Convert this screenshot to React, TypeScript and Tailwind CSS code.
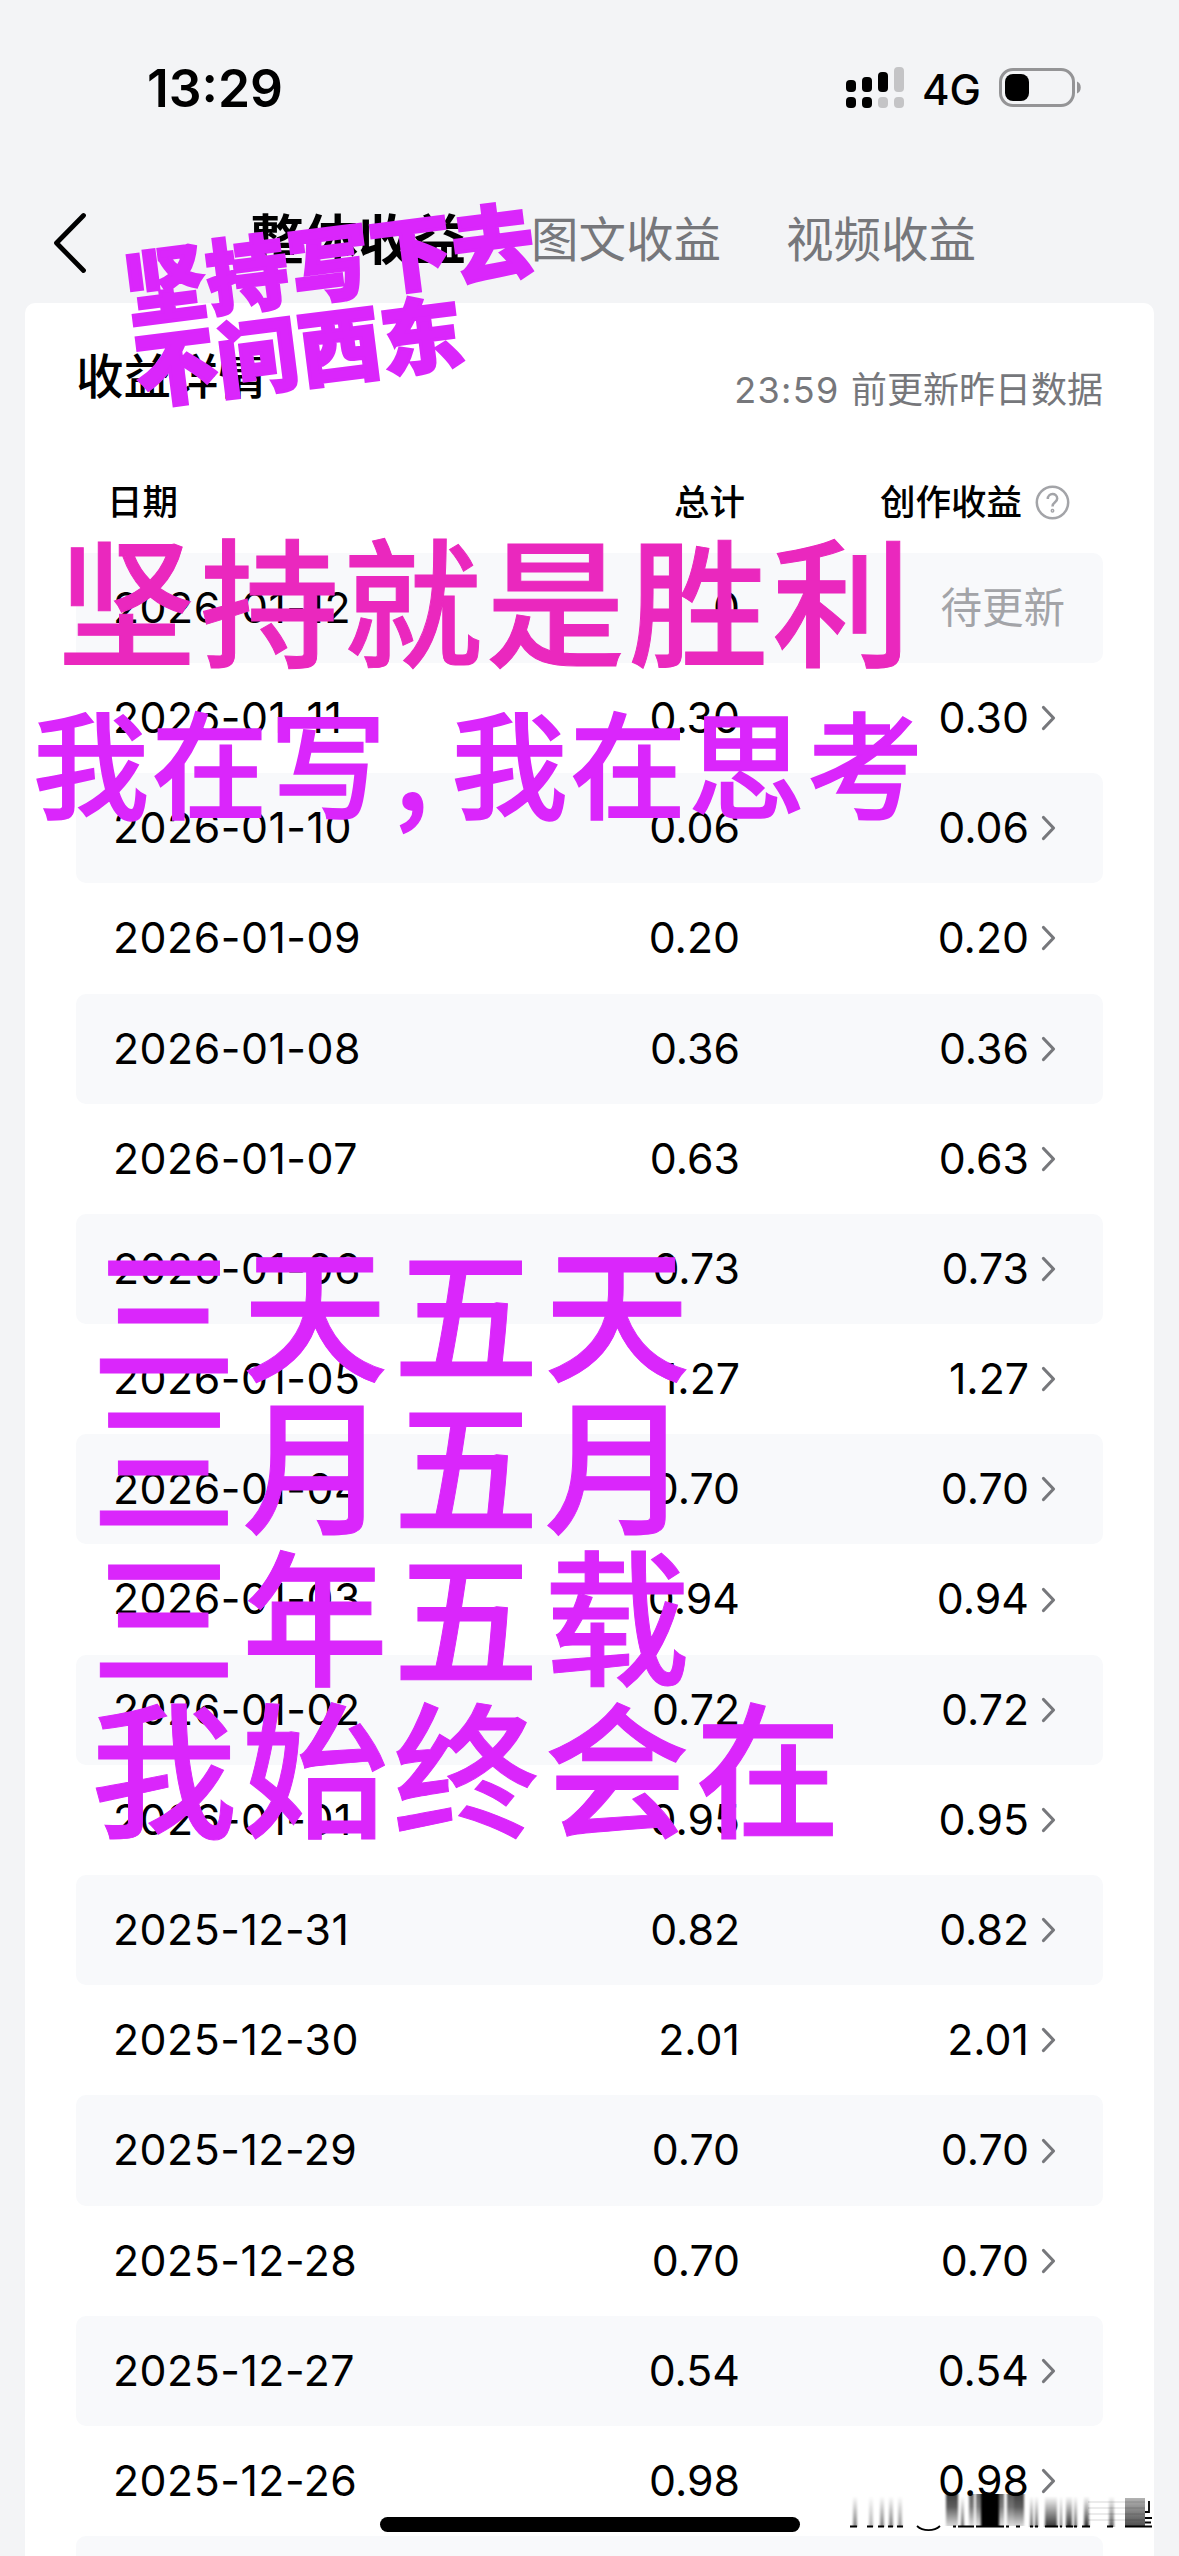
const ROWS = [
  { date: "2026-01-12", total: "0", creation: null },
  { date: "2026-01-11", total: "0.30", creation: "0.30" },
  { date: "2026-01-10", total: "0.06", creation: "0.06" },
  { date: "2026-01-09", total: "0.20", creation: "0.20" },
  { date: "2026-01-08", total: "0.36", creation: "0.36" },
  { date: "2026-01-07", total: "0.63", creation: "0.63" },
  { date: "2026-01-06", total: "0.73", creation: "0.73" },
  { date: "2026-01-05", total: "1.27", creation: "1.27" },
  { date: "2026-01-04", total: "0.70", creation: "0.70" },
  { date: "2026-01-03", total: "0.94", creation: "0.94" },
  { date: "2026-01-02", total: "0.72", creation: "0.72" },
  { date: "2026-01-01", total: "0.95", creation: "0.95" },
  { date: "2025-12-31", total: "0.82", creation: "0.82" },
  { date: "2025-12-30", total: "2.01", creation: "2.01" },
  { date: "2025-12-29", total: "0.70", creation: "0.70" },
  { date: "2025-12-28", total: "0.70", creation: "0.70" },
  { date: "2025-12-27", total: "0.54", creation: "0.54" },
  { date: "2025-12-26", total: "0.98", creation: "0.98" },
];

type Row = (typeof ROWS)[number];

// x, width, opacity of each streak in the corner mark
const STREAKS: [number, number, number][] = [
  [5, 4, 0.5],
  [21, 4, 0.3],
  [32, 4, 0.5],
  [41, 4, 0.5],
  [50, 4, 0.4],
  [113, 3, 0.6],
  [182, 3, 0.6],
  [187, 3, 0.6],
  [197, 12, 0.8],
  [212, 2, 0.6],
  [218, 6, 0.8],
  [226, 3, 0.6],
  [236, 5, 0.8],
  [261, 5, 0.6],
];

// streaks that hang from the digits above and stay dark over their whole height
const DARK_STREAKS: [number, number, number][] = [
  [98, 12, 0.75],
  [121, 5, 0.6],
  [128, 7, 0.6],
  [133, 17, 0.9],
  [150, 6, 0.6],
  [159, 7, 0.65],
  [166, 10, 0.75],
];

// short feet under the streaks: x, width
const FEET: [number, number][] = [
  [2, 7],
  [19, 6],
  [30, 6],
  [40, 5],
  [49, 6],
  [105, 3],
  [110, 16],
  [128, 28],
  [158, 3],
  [168, 4],
  [182, 3],
  [187, 3],
  [197, 13],
  [212, 2],
  [218, 7],
  [226, 3],
  [234, 8],
  [259, 6],
  [277, 27],
];

function StatusBar() {
  return (
    <div className="flex h-[174px] items-start justify-between pr-[97px] pl-[147px] pt-[56px]">
      <span className="text-[51.500px] leading-[64px] font-semibold">13:29</span>
      <div className="flex h-[64px] items-center">
        <svg width="58" height="42" viewBox="0 0 58 42">
          <rect x="0" y="13" width="10" height="12" rx="4" />
          <rect x="16" y="10" width="10" height="15" rx="4" />
          <rect x="32" y="5" width="10" height="20" rx="4" />
          <rect x="48" y="0" width="10" height="25" rx="4" fill="#c4c4c6" />
          <rect x="0" y="30" width="10" height="11" rx="4" />
          <rect x="16" y="30" width="10" height="11" rx="4" />
          <rect x="32" y="30" width="10" height="11" rx="4" fill="#c4c4c6" />
          <rect x="48" y="30" width="10" height="11" rx="4" fill="#c4c4c6" />
        </svg>
        <span className="ml-[18px] w-[60px] pt-[2px] text-[42px] font-medium">4G</span>
        <svg className="ml-[17px]" width="83" height="40" viewBox="0 0 83 40">
          <rect x="1.5" y="1.5" width="73" height="36" rx="12.5" fill="none" stroke="#949496" strokeWidth="3" />
          <rect x="6" y="6" width="24" height="27" rx="8" />
          <path d="M78 13.5c5 1.5 5 10.500 0 12z" fill="#949496" />
        </svg>
      </div>
    </div>
  );
}

function Tabs() {
  return (
    <nav className="flex h-[129px] items-center pl-[52px]">
      <svg width="36" height="64" viewBox="0 0 36 64" className="mt-2" fill="none" stroke="black" strokeWidth="4.800" strokeLinecap="round" strokeLinejoin="round">
        <path d="M31.500 4.500 4.500 32l27 27.500" />
      </svg>
      <div className="flex h-[129px] items-center pt-[3px] pl-[162px] text-[47.500px] text-[#76777b]">
        <span className="w-[281px] text-[54px] font-bold text-black">整体收益</span>
        <span className="w-[255px]">图文收益</span>
        <span>视频收益</span>
      </div>
    </nav>
  );
}

function RevenueRow({ row, striped }: { row: Row; striped: boolean }) {
  return (
    <li
      className={`flex h-[110.2px] items-center rounded-[10px] text-[42.800px] ${
        striped ? "bg-[#f8f9fb]" : "bg-white"
      }`}
    >
      <span className="w-[360px] pl-[37px] tracking-[0.500px]">{row.date}</span>
      <span className="w-[304px] text-right">{row.total}</span>
      {row.creation ? (
        <div className="flex flex-1 items-center justify-end pr-[47px]">
          <span>{row.creation}</span>
          <svg className="ml-[12px]" width="15" height="26" viewBox="0 0 15 26" fill="none" stroke="#77787c" strokeWidth="3.200" strokeLinecap="round" strokeLinejoin="round">
            <path d="m2.500 2.500 10 10.500-10 10.500" />
          </svg>
        </div>
      ) : (
        <span className="flex-1 pr-[38px] text-right text-[41.500px] text-[#a3a4a8]">待更新</span>
      )}
    </li>
  );
}

function Captions() {
  return (
    <div className="pointer-events-none absolute inset-0 font-medium whitespace-nowrap text-[#da26fb]">
      <div className="absolute top-[224px] left-[129px] -rotate-[7.2deg] text-[81px] leading-[83px] font-black tracking-[1.500px] [-webkit-text-stroke:3.5px_#da26fb]">
        <p>坚持写下去</p>
        <p>不问西东</p>
      </div>
      <p className="absolute top-[506px] left-[57px] text-[139px] leading-[200px] tracking-[4px] text-[#ea28be] [-webkit-text-stroke:1px_#ea28be]">
        坚持就是胜利
      </p>
      <p className="absolute top-[659px] left-[33px] text-[116px] leading-[200px] tracking-[2.500px] [-webkit-text-stroke:1.5px_#da26fb]">
        我在写<span className="inline-block w-[63px] pl-[6px] font-['Noto_Sans_CJK_SC']">,</span>我在思考
      </p>
      <div className="absolute top-[1241px] left-[91px] text-[146px] leading-[152px] tracking-[5px] [-webkit-text-stroke:1px_#da26fb]">
        <p>三天五天</p>
        <p>三月五月</p>
        <p>三年五载</p>
        <p>我始终会在</p>
      </div>
    </div>
  );
}

function CornerMark() {
  return (
    <svg className="absolute top-[2490px] left-[848px]" width="310" height="46" viewBox="0 0 310 46">
      <defs>
        <linearGradient id="streak" x1="0" y1="0" x2="0" y2="1">
          <stop offset="0" stopColor="#000" stopOpacity="0" />
          <stop offset="1" stopColor="#000" />
        </linearGradient>
        <linearGradient id="dark-streak" x1="0" y1="0" x2="0" y2="1">
          <stop offset="0" stopColor="#000" />
          <stop offset="0.4" stopColor="#000" stopOpacity="0.850" />
          <stop offset="1" stopColor="#000" stopOpacity="0.200" />
        </linearGradient>
        <linearGradient id="block" x1="0" y1="0" x2="0" y2="1">
          <stop offset="0" stopColor="#000" stopOpacity="0.300" />
          <stop offset="1" stopColor="#000" stopOpacity="0.700" />
        </linearGradient>
        <filter id="soften" x="-5%" y="-5%" width="110%" height="110%">
          <feGaussianBlur stdDeviation="0.900 0" />
        </filter>
      </defs>
      <g filter="url(#soften)">
        {STREAKS.map(([x, width, opacity]) => (
          <rect key={x} x={x} y="6" width={width} height="31" fill="url(#streak)" opacity={opacity} />
        ))}
        {DARK_STREAKS.map(([x, width, opacity]) => (
          <rect key={x} x={x} y="4" width={width} height="32" fill="url(#dark-streak)" opacity={opacity} />
        ))}
        <rect x="133" y="4" width="18" height="32" />
      </g>
      <rect x="277" y="8" width="20" height="29" fill="url(#block)" />
      <path d="M240 12h57M240 18h57M240 24h57M240 30h57" stroke="#000" strokeOpacity="0.080" strokeWidth="2" />
      {FEET.map(([x, width]) => (
        <rect key={x} x={x} y="35.500" width={width} height="2" />
      ))}
      <path d="M69 36c6 5.500 17 5.500 23 0" fill="none" stroke="#000" strokeWidth="1.800" />
      <path d="M301 11v11h-4M297 28h7M297 32.500h6" fill="none" stroke="#000" strokeWidth="1.800" />
    </svg>
  );
}

export default function App() {
  return (
    <div className="relative h-[2556px] w-[1179px] overflow-hidden bg-[#f3f4f6] font-[Inter,'Noto_Sans_CJK_SC',sans-serif] text-black">
      <StatusBar />
      <Tabs />
      <main className="mx-[25px] h-[2300px] rounded-t-[10px] bg-white px-[51px]">
        <div className="flex h-[150px] items-center justify-between">
          <h1 className="pb-[3px] text-[47.500px] font-medium">收益详情</h1>
          <span className="pt-[23px] text-[36px] text-[#76777b]">
            <span className="tracking-[1.300px]">23:59 </span>前更新昨日数据
          </span>
        </div>
        <div className="flex h-[99.800px] items-center text-[35.500px] font-medium">
          <span className="w-[360px] pl-[31px]">日期</span>
          <span className="w-[309px] text-right">总计</span>
          <div className="flex flex-1 items-center justify-end pr-[33px]">
            <span>创作收益</span>
            <svg className="ml-[13px]" width="35" height="35" viewBox="0 0 35 35" fill="none" stroke="#a3a4a8" strokeWidth="2.500">
              <circle cx="17.500" cy="17.500" r="15.700" />
              <path d="M12.800 14c0-6.500 9.400-6.500 9.400-.5 0 4-4.700 3.500-4.700 8" />
              <circle cx="17.500" cy="25.800" r="0.700" />
            </svg>
          </div>
        </div>
        <ul>
          {ROWS.map((row, i) => (
            <RevenueRow key={row.date} row={row} striped={i % 2 === 0} />
          ))}
          <li className="h-[110px] rounded-[10px] bg-[#f8f9fb]" />
        </ul>
      </main>
      <Captions />
      <CornerMark />
      <div className="absolute bottom-[24px] left-[380px] h-[15px] w-[420px] rounded-full bg-black" />
    </div>
  );
}
